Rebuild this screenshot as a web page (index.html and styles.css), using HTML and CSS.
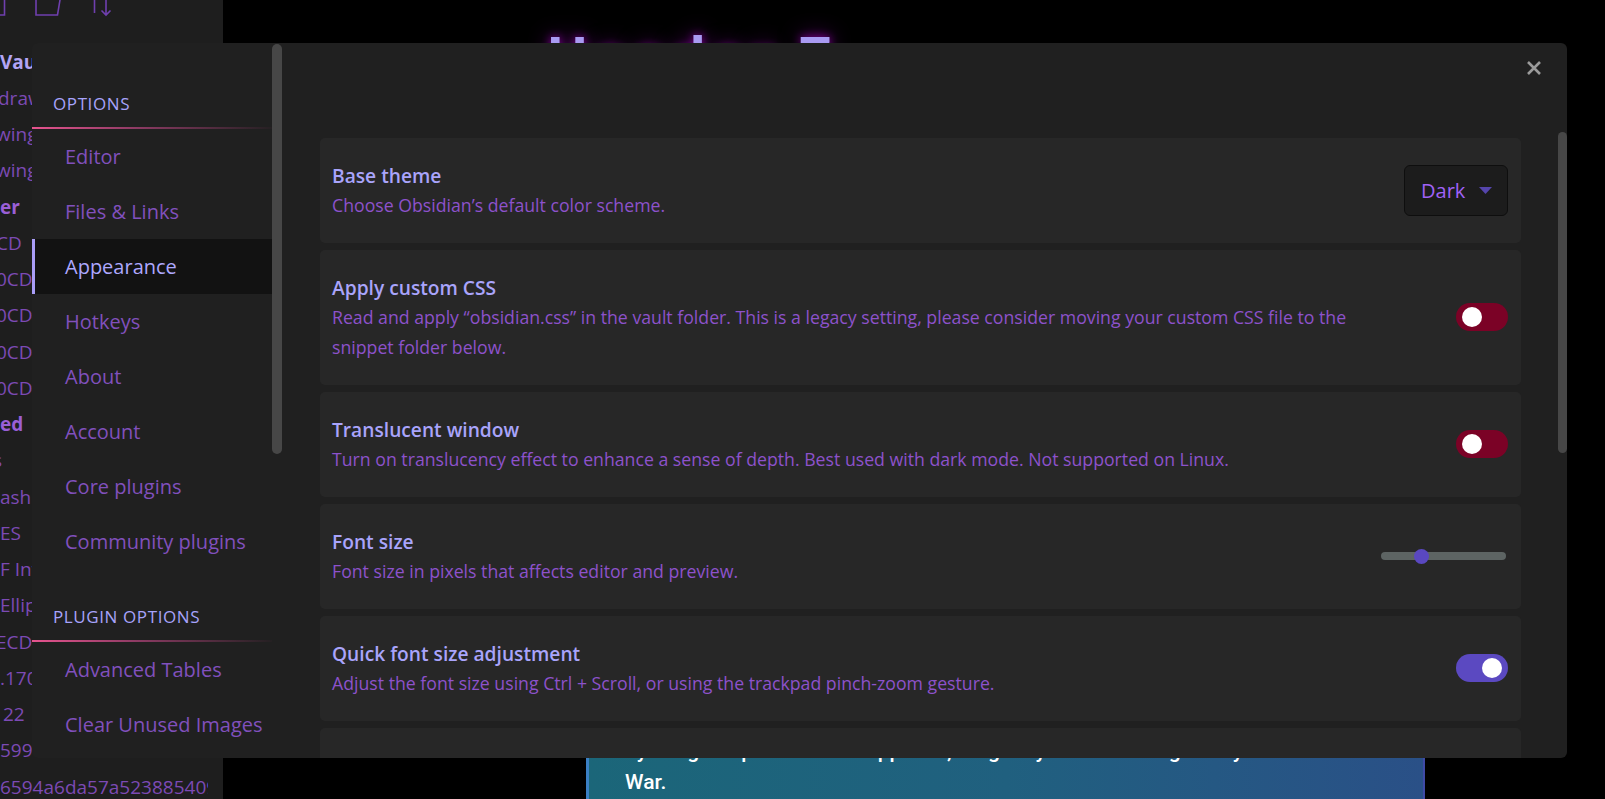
FILE: index.html
```html
<!DOCTYPE html>
<html lang="en">
<head>
<meta charset="utf-8">
<title>Settings – Appearance</title>
<link rel="stylesheet" href="styles.css">
</head>
<body>
<aside class="sidebar">
  <svg class="side-icons" viewBox="0 0 223 16" width="223" height="16">
    <path d="M-10 15 H4.5 V-6"/>
    <path d="M36 -6 V15 H57.5 L60 0 V-6"/>
    <path d="M94.5 -6 V13"/>
    <path d="M106 -6 V15 M101.5 10.5 L106 15 L110.5 10.5"/>
  </svg>
  <div class="tree">
    <div class="row bold vault">Vault</div>
    <div class="row shift2">drawings</div>
    <div class="row shift3">wing</div>
    <div class="row shift3">wing</div>
    <div class="row bold">er</div>
    <div class="row shift3">CD</div>
    <div class="row shift3">0CD1</div>
    <div class="row shift3">0CD2</div>
    <div class="row shift3">0CD3</div>
    <div class="row shift3">0CD4</div>
    <div class="row bold">ed</div>
    <div class="row shift6">s</div>
    <div class="row">ash</div>
    <div class="row">ES</div>
    <div class="row">F Invoice</div>
    <div class="row">Ellipse</div>
    <div class="row shift3">ECD5</div>
    <div class="row">.170</div>
    <div class="row indent">22</div>
    <div class="row">599</div>
    <div class="row">6594a6da57a523885409</div>
  </div>
</aside>

<main class="main">
  <h1 class="heading">Header 7</h1>
  <div class="callout">
    <p class="callout-text">It was the first modern conflict of the age, a long and bloody one, and many nations<br>by the great powers were opposed, fought by Russia through the years of the Crimean<br>War.</p>
  </div>
</main>

<div class="modal">
  <nav class="nav">
    <div class="nav-list">
      <div class="nav-header">Options</div>
      <div class="nav-item">Editor</div>
      <div class="nav-item">Files &amp; Links</div>
      <div class="nav-item active">Appearance</div>
      <div class="nav-item">Hotkeys</div>
      <div class="nav-item">About</div>
      <div class="nav-item">Account</div>
      <div class="nav-item">Core plugins</div>
      <div class="nav-item">Community plugins</div>
      <div class="nav-header">Plugin options</div>
      <div class="nav-item">Advanced Tables</div>
      <div class="nav-item">Clear Unused Images</div>
    </div>
    <div class="nav-track"><div class="nav-thumb"></div></div>
  </nav>

  <section class="content">
    <svg class="close" viewBox="0 0 16 16" width="16" height="16"><path d="M2 2 L14 14 M14 2 L2 14"/></svg>
    <div class="scroll-thumb"></div>
    <div class="cards">
      <div class="card">
        <div class="info">
          <div class="title">Base theme</div>
          <div class="desc">Choose Obsidian’s default color scheme.</div>
        </div>
        <div class="dropdown"><span>Dark</span><svg class="caret" viewBox="0 0 13 7" width="13" height="7"><path d="M0 0 H13 L6.5 7 Z"/></svg></div>
      </div>
      <div class="card">
        <div class="info">
          <div class="title">Apply custom CSS</div>
          <div class="desc">Read and apply “obsidian.css” in the vault folder. This is a legacy setting, please consider moving your custom CSS file to the snippet folder below.</div>
        </div>
        <div class="toggle"><div class="knob"></div></div>
      </div>
      <div class="card">
        <div class="info">
          <div class="title">Translucent window</div>
          <div class="desc">Turn on translucency effect to enhance a sense of depth. Best used with dark mode. Not supported on Linux.</div>
        </div>
        <div class="toggle"><div class="knob"></div></div>
      </div>
      <div class="card">
        <div class="info">
          <div class="title">Font size</div>
          <div class="desc">Font size in pixels that affects editor and preview.</div>
        </div>
        <div class="slider"><div class="slider-thumb"></div></div>
      </div>
      <div class="card">
        <div class="info">
          <div class="title">Quick font size adjustment</div>
          <div class="desc">Adjust the font size using Ctrl + Scroll, or using the trackpad pinch-zoom gesture.</div>
        </div>
        <div class="toggle on"><div class="knob"></div></div>
      </div>
      <div class="card">
        <div class="info">
          <div class="title">Zoom level</div>
          <div class="desc">Controls the overall zoom level of the app.</div>
        </div>
      </div>
    </div>
  </section>
</div>
</body>
</html>
```
FILE: styles.css
```css
* { box-sizing: border-box; }

body {
  margin: 0;
  height: 799px;
  overflow: hidden;
  background: #000;
  display: flex;
  font-family: "Open Sans", "Noto Sans", sans-serif;
}

/* ---------- left file sidebar (behind the modal) ---------- */
.sidebar {
  width: 223px;
  flex: none;
  background: #1e1e1e;
  overflow: hidden;
}
.side-icons {
  display: block;
  overflow: visible;
  fill: none;
  stroke: #6f3fae;
  stroke-width: 1.6;
}
.tree {
  width: 208px;
  overflow: hidden;
  padding-top: 27.6px;
}
.row {
  height: 36.25px;
  line-height: 36.25px;
  font-size: 19px;
  color: #7c4ab4;
  white-space: nowrap;
}
.row.bold { font-weight: 700; color: #9a5fd6; }
.row.vault { color: #b3a5f5; }
.row.shift2 { text-indent: -2px; }
.row.shift3 { text-indent: -4px; }
.row.shift6 { text-indent: -7px; }
.row.indent { text-indent: 3px; }

/* ---------- main note area (behind the modal) ---------- */
.main {
  flex: 1;
  display: flex;
  flex-direction: column;
  overflow: hidden;
}
.heading {
  margin: 27px 0 0 323px;
  font-size: 56px;
  line-height: 56px;
  font-weight: 700;
  letter-spacing: 5px;
  color: #a99af2;
  text-shadow: 0 0 10px #8a00a0, 0 0 22px #5c0070;
}
.callout {
  margin: auto 0 0 363px;
  width: 839px;
  padding: 12px 0 1px 36px;
  background: linear-gradient(90deg, #1b6679 0%, #20607f 50%, #2a5087 100%);
  border-left: 3px solid #3a7fc4;
  border-right: 2px solid #3f4aa6;
}
.callout-text {
  margin: 0;
  font-family: Roboto, "Open Sans", sans-serif;
  font-weight: 500;
  font-size: 21px;
  line-height: 31px;
  color: #ffffff;
  white-space: nowrap;
}

/* ---------- settings modal ---------- */
.modal {
  position: absolute;
  left: 32px;
  top: 43.3px;
  width: 1535px;
  height: 715px;
  background: #202020;
  border-radius: 6px;
  display: flex;
  overflow: hidden;
}
.nav {
  display: flex;
  width: 250px;
  flex: none;
}
.nav-list {
  width: 240px;
  padding-top: 13px;
}
.nav-header {
  padding: 36px 0 11px 21px;
  line-height: 24px;
  font-size: 17px;
  font-weight: 500;
  text-transform: uppercase;
  letter-spacing: 0.6px;
  color: #a7a3fb;
  border-bottom: 2px solid transparent;
  border-image: linear-gradient(90deg, #e8548f 0%, #8a3a62 45%, #242022 100%) 1;
}
.nav-item {
  height: 55px;
  line-height: 55px;
  padding-left: 33px;
  font-size: 20px;
  color: #8150bd;
  white-space: nowrap;
}
.nav-item.active {
  background: #121212;
  box-shadow: inset 3px 0 #a99df7;
  color: #aea8ff;
}
.nav-track { width: 10px; }
.nav-thumb {
  margin-top: 1px;
  height: 410px;
  background: #474747;
  border-radius: 5px;
}

.content {
  flex: 1;
  position: relative;
  padding: 94.7px 46px 0 38px;
  overflow: hidden;
}
.close {
  position: absolute;
  top: 16.7px;
  right: 25px;
  fill: none;
  stroke: #9b9b9b;
  stroke-width: 2.6;
}
.scroll-thumb {
  position: absolute;
  right: 0;
  top: 88.7px;
  width: 9px;
  height: 321px;
  background: #474747;
  border-radius: 5px;
}
.cards {
  display: flex;
  flex-direction: column;
  gap: 7px;
}
.card {
  display: flex;
  align-items: center;
  padding: 23px 13px 23px 12px;
  background: #272727;
  border-radius: 5px;
}
.info {
  flex: 1;
  min-width: 0;
  margin-right: 72px;
}
.title {
  font-size: 19.2px;
  font-weight: 600;
  line-height: 29px;
  color: #a9a4fb;
}
.desc {
  font-size: 17.7px;
  line-height: 30px;
  color: #8d52cb;
}

.dropdown {
  flex: none;
  width: 104px;
  height: 51px;
  display: flex;
  align-items: center;
  justify-content: space-between;
  padding: 0 15px 0 16px;
  background: #1c1c1c;
  border: 1px solid #0e0e0e;
  border-radius: 6px;
  font-size: 20px;
  color: #a062f6;
}
.caret { fill: #5545ac; }

.toggle {
  flex: none;
  width: 52px;
  height: 28px;
  border-radius: 14px;
  padding: 0 6px;
  display: flex;
  align-items: center;
  background: #7b0226;
}
.toggle.on {
  background: #5b49c1;
  justify-content: flex-end;
}
.knob {
  width: 20px;
  height: 20px;
  border-radius: 50%;
  background: #ffffff;
}

.slider {
  flex: none;
  width: 125px;
  height: 8px;
  margin-right: 2px;
  border-radius: 4px;
  background: #5d6463;
  display: flex;
  align-items: center;
}
.slider-thumb {
  flex: none;
  margin-left: 33px;
  width: 15px;
  height: 15px;
  border-radius: 50%;
  background: #5a48c0;
}
```
